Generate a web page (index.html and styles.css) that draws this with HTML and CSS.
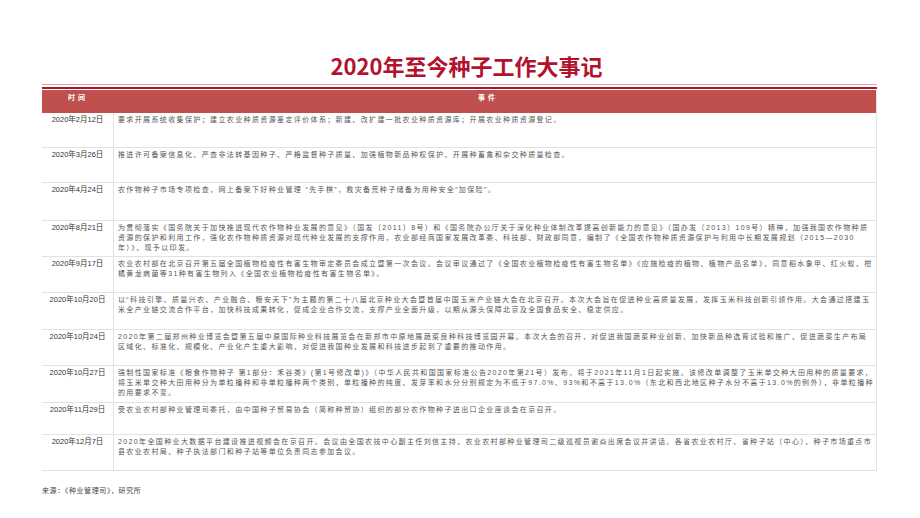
FILE: index.html
```html
<!DOCTYPE html>
<html lang="zh">
<head>
<meta charset="utf-8">
<title>2020年至今种子工作大事记</title>
<link rel="stylesheet" href="styles.css">
</head>
<body>
<div class="page">
  <h1 class="title">2020年至今种子工作大事记</h1>
  <div class="rule"><div class="rule-thin"></div><div class="rule-thick"></div></div>
  <div class="table">
    <div class="row head">
      <div class="cell date">时间</div>
      <div class="cell event">事件</div>
    </div>
    <div class="row h35">
      <div class="cell date">2020年2月12日</div>
      <div class="cell event">要求开展系统收集保护；建立农业种质资源鉴定评价体系；新建、改扩建一批农业种质资源库；开展农业种质资源登记。</div>
    </div>
    <div class="row h35">
      <div class="cell date">2020年3月26日</div>
      <div class="cell event">推进许可备案信息化、严查非法转基因种子、严格监督种子质量、加强植物新品种权保护、开展种畜禽和杂交种质量检查。</div>
    </div>
    <div class="row h38">
      <div class="cell date">2020年4月24日</div>
      <div class="cell event">农作物种子市场专项检查，网上备案下好种业管理 “先手棋”，救灾备荒种子储备为用种安全“加保险”。</div>
    </div>
    <div class="row h36">
      <div class="cell date">2020年8月21日</div>
      <div class="cell event">为贯彻落实《国务院关于加快推进现代农作物种业发展的意见》（国发〔2011〕8号）和《国务院办公厅关于深化种业体制改革提高创新能力的意见》（国办发〔2013〕109号）精神，加强我国农作物种质资源的保护和利用工作，强化农作物种质资源对现代种业发展的支撑作用，农业部经商国家发展改革委、科技部、财政部同意，编制了《全国农作物种质资源保护与利用中长期发展规划（2015—2030年）》，现予以印发。</div>
    </div>
    <div class="row h36">
      <div class="cell date">2020年9月17日</div>
      <div class="cell event">农业农村部在北京召开第五届全国植物检疫性有害生物审定委员会成立暨第一次会议。会议审议通过了《全国农业植物检疫性有害生物名单》《应施检疫的植物、植物产品名单》，同意稻水象甲、红火蚁、柑橘黄龙病菌等31种有害生物列入《全国农业植物检疫性有害生物名单》。</div>
    </div>
    <div class="row h37">
      <div class="cell date">2020年10月20日</div>
      <div class="cell event">以“科技引擎、质量兴农、产业融合、粮安天下”为主题的第二十八届北京种业大会暨首届中国玉米产业链大会在北京召开。本次大会旨在促进种业高质量发展，发挥玉米科技创新引领作用。大会通过搭建玉米全产业链交流合作平台，加快科技成果转化，促成企业合作交流，支撑产业全面升级，以期从源头保障北京及全国食品安全、稳定供应。</div>
    </div>
    <div class="row h36">
      <div class="cell date">2020年10月24日</div>
      <div class="cell event">2020年第二届郑州种业博览会暨第五届中原国际种业科技展览会在新郑市中原地展蔬菜良种科技博览园开幕。本次大会的召开，对促进我国蔬菜种业创新、加快新品种选育试验和推广、促进蔬菜生产布局区域化、标准化、规模化、产业化产生重大影响，对促进我国种业发展和科技进步起到了重要的推动作用。</div>
    </div>
    <div class="row h37">
      <div class="cell date">2020年10月27日</div>
      <div class="cell event">强制性国家标准《粮食作物种子 第1部分：禾谷类》(第1号修改单)》（中华人民共和国国家标准公告2020年第21号）发布，将于2021年11月1日起实施。该修改单调整了玉米单交种大田用种的质量要求，将玉米单交种大田用种分为单粒播种和非单粒播种两个类别，单粒播种的纯度、发芽率和水分分别规定为不低于97.0%、93%和不高于13.0%（东北和西北地区种子水分不高于13.0%的例外），非单粒播种 的用要求不变。</div>
    </div>
    <div class="row h32">
      <div class="cell date">2020年11月29日</div>
      <div class="cell event">受农业农村部种业管理司委托，由中国种子贸易协会（简称种贸协）组织的部分农作物种子进出口企业座谈会在京召开。</div>
    </div>
    <div class="row h36">
      <div class="cell date">2020年12月7日</div>
      <div class="cell event">2020年全国种业大数据平台建设推进视频会在京召开。会议由全国农技中心副主任刘信主持，农业农村部种业管理司二级巡视员谢焱出席会议并讲话。各省农业农村厅、省种子站（中心）、种子市场重点市县农业农村局、种子执法部门和种子站等单位负责同志参加会议。</div>
    </div>
  </div>
  <p class="source">来源：《种业管理司》，研究所</p>
</div>
</body>
</html>
```
FILE: styles.css
```css
html, body {
  margin: 0;
  padding: 0;
  background: #ffffff;
}
body {
  width: 920px;
  height: 518px;
  overflow: hidden;
  font-family: "Liberation Sans", "Noto Sans CJK SC", sans-serif;
}
.page {
  padding: 52px 43px 0 42px;
}
.title {
  margin: 0;
  padding-left: 14px;
  text-align: center;
  font-family: "Noto Sans CJK SC", sans-serif;
  font-size: 22px;
  line-height: 26px;
  font-weight: 700;
  color: #b3122f;
}
.rule {
  margin-top: 6px;
}
.rule-thin {
  height: 1px;
  background: #e6a3ad;
}
.rule-thick {
  height: 2px;
  margin-top: 2px;
  background: #a8182d;
}
.table {
  margin-top: 1px;
  border-right: 1px solid #e4e4e4;
}
.row {
  display: grid;
  grid-template-columns: 72px 1fr;
  box-sizing: border-box;
  border-bottom: 1px solid #e2e2e2;
}
.row.head {
  height: 23px;
  background: #c0504d;
  border-bottom: none;
}
.head .cell {
  color: #ffffff;
  font-family: "Noto Sans CJK SC", sans-serif;
  font-size: 7px;
  font-weight: 700;
  letter-spacing: 3px;
  text-align: center;
  padding-top: 2px;
  border-right: none;
}
.head .event {
  padding-right: 18px;
}
.h32 { height: 32px; }
.h35 { height: 35px; }
.h36 { height: 36px; }
.h37 { height: 37px; }
.h38 { height: 38px; }
.cell {
  box-sizing: border-box;
}
.date {
  border-right: 1px solid #e2e2e2;
  text-align: center;
  font-family: "Liberation Sans", "Noto Sans CJK SC", sans-serif;
  font-size: 7.5px;
  line-height: 10px;
  color: #333333;
  padding-top: 2px;
}
.event {
  padding: 2px 2px 0 4px;
  font-family: "Liberation Sans", "Noto Sans CJK SC", sans-serif;
  font-size: 7px;
  line-height: 10px;
  letter-spacing: 1.37px;
  color: #555555;
}
.source {
  margin: 14px 0 0 0;
  font-family: "Noto Sans CJK SC", sans-serif;
  font-size: 7px;
  line-height: 10px;
  letter-spacing: 0.6px;
  color: #444444;
}
```
